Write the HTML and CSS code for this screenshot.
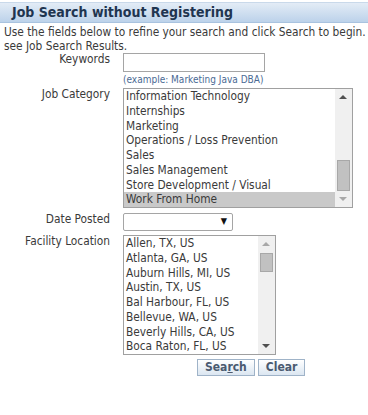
FILE: index.html
```html
<!DOCTYPE html>
<html lang="en">

<head>
    <meta charset="UTF-8">
    <meta name="viewport" content="width=device-width, initial-scale=1.0">
    <title>Job Search</title>
    <link rel="stylesheet" href="styles.css">
</head>

<body>
    <div class="wrap">
        <h2 class="title">Job Search without Registering</h2>

        <p class="intro">
            Use the fields below to refine your search and click Search to begin.<br>
            see Job Search Results.
        </p>

        <div class="form">
            <label class="lbl">Keywords</label>
            <div class="field tight">
                <input type="text" class="txt">
                <div class="hint">(example: Marketing Java DBA)</div>
            </div>

            <label class="lbl">Job Category</label>
            <div class="field">
                <div class="listbox wide">
                    <div class="items">
                        <div>Information Technology</div>
                        <div>Internships</div>
                        <div>Marketing</div>
                        <div>Operations / Loss Prevention</div>
                        <div>Sales</div>
                        <div>Sales Management</div>
                        <div>Store Development / Visual</div>
                        <div class="sel">Work From Home</div>
                    </div>
                    <div class="sbar">
                        <span class="arr up"></span>
                        <span class="thumb thumb-low"></span>
                        <span class="arr down light"></span>
                    </div>
                </div>
            </div>

            <label class="lbl">Date Posted</label>
            <div class="field short">
                <div class="drop"><span class="caret">&#9660;</span></div>
            </div>

            <label class="lbl">Facility Location</label>
            <div class="field">
                <div class="listbox narrow">
                    <div class="items">
                        <div>Allen, TX, US</div>
                        <div>Atlanta, GA, US</div>
                        <div>Auburn Hills, MI, US</div>
                        <div>Austin, TX, US</div>
                        <div>Bal Harbour, FL, US</div>
                        <div>Bellevue, WA, US</div>
                        <div>Beverly Hills, CA, US</div>
                        <div>Boca Raton, FL, US</div>
                    </div>
                    <div class="sbar">
                        <span class="arr up light"></span>
                        <span class="thumb thumb-top"></span>
                        <span class="arr down"></span>
                    </div>
                </div>
            </div>
        </div>

        <div class="buttons">
            <button class="btn">Sea<u>r</u>ch</button>
            <button class="btn">Clear</button>
        </div>
    </div>
</body>

</html>
```

FILE: styles.css
```css
body {
    margin: 0;
    background: #fff;
    font-family: "DejaVu Sans Condensed", "DejaVu Sans", sans-serif;
    font-size: 11.8px;
    color: #3a3a3a;
}

.wrap {
    width: 368px;
    padding-top: 2px;
}

.title {
    margin: 0;
    height: 19px;
    line-height: 19px;
    padding-left: 12px;
    font-size: 14px;
    font-weight: bold;
    color: #1f3550;
    background: linear-gradient(#e3ecf6, #bcd2ea);
    border-top: 1px solid #c9d9ea;
    border-bottom: 1px solid #a9c3df;
}

.intro {
    margin: 2px 0 0 4px;
    line-height: 14px;
    white-space: nowrap;
}

.form {
    display: grid;
    grid-template-columns: 110px 1fr;
    column-gap: 13px;
}

.lbl {
    text-align: right;
    line-height: 12px;
}

.field {
    margin-bottom: 5px;
}

.field.tight {
    margin-bottom: 3px;
}

.field.short {
    margin-bottom: 4px;
}

.txt {
    display: block;
    width: 142px;
    height: 19px;
    box-sizing: border-box;
    margin: 0;
    border: 1px solid #a5a5a5;
}

.hint {
    font-size: 10px;
    color: #4a6a94;
    margin-top: 2px;
    line-height: 11px;
}

.listbox {
    display: flex;
    height: 120px;
    box-sizing: border-box;
    border: 1px solid #a0a0a0;
}

.wide {
    width: 230px;
}

.narrow {
    width: 153px;
}

.items {
    flex: 1;
    overflow: hidden;
}

.items div {
    height: 14.75px;
    line-height: 14.75px;
    padding-left: 2px;
    white-space: nowrap;
}

.items .sel {
    background: #c9c9c9;
}

.sbar {
    width: 17px;
    background: #f0f0f0;
    position: relative;
}

.arr {
    position: absolute;
    left: 4px;
    width: 0;
    height: 0;
    border-left: 4px solid transparent;
    border-right: 4px solid transparent;
}

.arr.up {
    top: 6px;
    border-bottom: 4px solid #505050;
}

.arr.down {
    bottom: 6px;
    border-top: 4px solid #505050;
}

.arr.light.up {
    border-bottom-color: #a8a8a8;
}

.arr.light.down {
    border-top-color: #a8a8a8;
}

.thumb {
    position: absolute;
    left: 2px;
    width: 13px;
    background: #c1c1c1;
    border: 1px solid #a8a8a8;
    box-sizing: border-box;
}

.thumb-low {
    top: 71px;
    height: 31px;
}

.thumb-top {
    top: 17px;
    height: 19px;
}

.drop {
    width: 110px;
    height: 18px;
    box-sizing: border-box;
    border: 1px solid #a5a5a5;
    border-radius: 2px;
    position: relative;
}

.caret {
    position: absolute;
    right: 5px;
    top: 2px;
    font-size: 9px;
    color: #111;
}

.buttons {
    display: flex;
    gap: 3px;
    padding-left: 197px;
    margin-top: -1px;
}

.btn {
    height: 17px;
    padding: 0 7px;
    font-family: "DejaVu Sans Condensed", "DejaVu Sans", sans-serif;
    font-size: 12px;
    font-weight: bold;
    color: #4a5a70;
    background: linear-gradient(#ffffff, #dbe6f1);
    border: 1px solid #9fb3c8;
    line-height: 15px;
}
```
